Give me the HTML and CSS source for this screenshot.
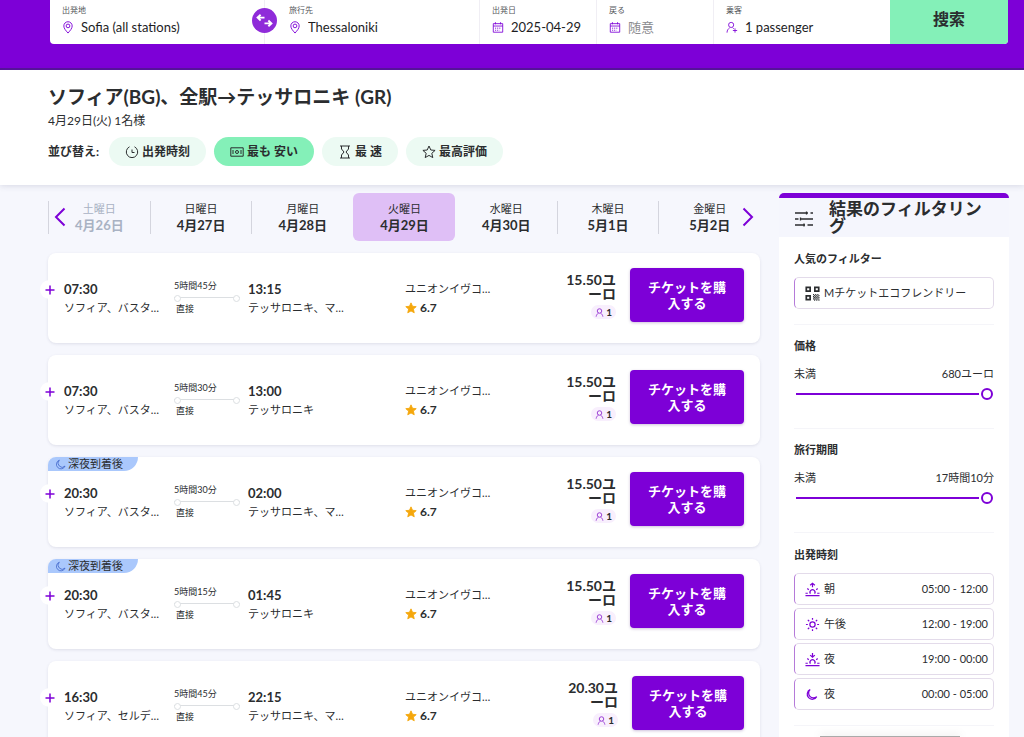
FILE: index.html
```html
<!DOCTYPE html>
<html lang="ja">
<head>
<meta charset="utf-8">
<meta name="viewport" content="width=device-width, initial-scale=1">
<title>ソフィア - テッサロニキ</title>
<link rel="stylesheet" href="styles.css">
</head>
<body>
<svg class="sprite" aria-hidden="true">
  <symbol id="pin" viewBox="0 0 12 14"><path d="M6 13C3.600 10.200 1.500 8 1.500 5.300a4.500 4.500 0 0 1 9 0C10.500 8 8.400 10.200 6 13Z"/><circle cx="6" cy="5.300" r="2"/></symbol>
  <symbol id="calendar" viewBox="0 0 14 14"><path d="M1.500 2.500h11v10h-11zM1.500 5.300h11M4 .8v2.500M10 .8v2.500"/><path d="M3.500 7.800h7M3.500 10.200h5" stroke-dasharray="1.200 1"/></symbol>
  <symbol id="person-plus" viewBox="0 0 14 14"><circle cx="6" cy="4" r="3"/><path d="M1.200 13c0-3 1.500-4.500 3-5.500M7.800 7.200 9 8.500M10.500 8v5M8 10.500h5"/></symbol>
  <symbol id="person" viewBox="0 0 12 12"><circle cx="6" cy="4" r="3"/><path d="M1.500 11.500c.3-2 1.500-3.700 3.200-5M10.500 11.500c-.3-2-1.500-3.700-3.200-5"/></symbol>
  <symbol id="moon" viewBox="0 0 14 14"><path d="M5.500 1.500a5.700 5.700 0 1 0 7.300 7.500A5.200 5.200 0 0 1 5.500 1.500Z"/></symbol>
  <symbol id="star" viewBox="0 0 14 14"><path d="m7 1 1.800 4 4.300.4-3.300 2.900 1 4.300L7 10.400l-3.800 2.200 1-4.300L.9 5.400 5.200 5z"/></symbol>
  <symbol id="plus" viewBox="0 0 10 10"><path d="M5 .5v9M.5 5h9"/></symbol>
</svg>

<header class="hero">
  <form class="search">
    <div class="field">
      <label class="field__label" for="from">出発地</label>
      <div class="field__row"><svg class="icon icon--field"><use href="#pin"/></svg><input class="field__input" id="from" type="text" value="Sofia (all stations)"></div>
      <button class="swap" type="button" aria-label="入れ替え"><svg viewBox="0 0 26 26"><path d="M13 10H6M9 7l-3.200 3L9 13M13 16h7M17 13l3.200 3-3.200 3"/></svg></button>
    </div>
    <div class="field field--to">
      <label class="field__label" for="to">旅行先</label>
      <div class="field__row"><svg class="icon icon--field"><use href="#pin"/></svg><input class="field__input" id="to" type="text" value="Thessaloniki"></div>
    </div>
    <div class="field">
      <label class="field__label" for="depart">出発日</label>
      <div class="field__row"><svg class="icon icon--field"><use href="#calendar"/></svg><input class="field__input" id="depart" type="text" value="2025-04-29"></div>
    </div>
    <div class="field">
      <label class="field__label" for="return">戻る</label>
      <div class="field__row"><svg class="icon icon--field"><use href="#calendar"/></svg><input class="field__input" id="return" type="text" placeholder="随意"></div>
    </div>
    <div class="field field--people">
      <label class="field__label" for="people">乗客</label>
      <div class="field__row"><svg class="icon icon--field"><use href="#person-plus"/></svg><input class="field__input" id="people" type="text" value="1 passenger"></div>
    </div>
    <button class="search__submit" type="submit">搜索</button>
  </form>
</header>

<section class="summary">
  <h1 class="summary__title">ソフィア(BG)、全駅→テッサロニキ (GR)</h1>
  <p class="summary__sub">4月29日(火) 1名様</p>
  <div class="sort">
    <span class="sort__label">並び替え:</span>
    <button class="pill" type="button"><svg class="icon icon--pill" viewBox="0 0 14 14"><path d="M4.500 1.800A5.700 5.700 0 1 0 9.500 1.800M7 4.500v3h2.500"/></svg>出発時刻</button>
    <button class="pill pill--active" type="button"><svg class="icon icon--pill" viewBox="0 0 14 14"><path d="M.8 2.800h12.400v8.400H.8zM3 5v4M11 5v4"/><circle cx="7" cy="7" r="1.500"/></svg>最も 安い</button>
    <button class="pill" type="button"><svg class="icon icon--pill" viewBox="0 0 14 14"><path d="M2 1h10M2 13h10M3.500 1v3L6 7l-2.500 3v3M10.500 1v3L8 7l2.500 3v3"/></svg>最 速</button>
    <button class="pill" type="button"><svg class="icon icon--pill"><use href="#star"/></svg>最高評価</button>
  </div>
</section>

<main class="content">
  <div class="results">
    <nav class="days" aria-label="日付">
      <button class="days__arrow days__arrow--prev" type="button" aria-label="前へ"><svg viewBox="0 0 12 20"><path d="M10.500 1.500 2 10l8.500 8.500"/></svg></button>
      <a class="day day--past" href="#"><span class="day__in"><span>土曜日</span><b>4月26日</b></span></a>
      <a class="day" href="#"><span class="day__in"><span>日曜日</span><b>4月27日</b></span></a>
      <a class="day" href="#"><span class="day__in"><span>月曜日</span><b>4月28日</b></span></a>
      <a class="day day--active" href="#"><span class="day__in"><span>火曜日</span><b>4月29日</b></span></a>
      <a class="day day--first" href="#"><span class="day__in"><span>水曜日</span><b>4月30日</b></span></a>
      <a class="day" href="#"><span class="day__in"><span>木曜日</span><b>5月1日</b></span></a>
      <a class="day" href="#"><span class="day__in"><span>金曜日</span><b>5月2日</b></span></a>
      <button class="days__arrow days__arrow--next" type="button" aria-label="次へ"><svg viewBox="0 0 12 20"><path d="M1.500 1.500 10 10l-8.500 8.500"/></svg></button>
    </nav>

    <article class="trip">
      <button class="trip__more" type="button" aria-label="詳細"><svg><use href="#plus"/></svg></button>
      <div class="stop"><b class="stop__time">07:30</b><span class="stop__name">ソフィア、バスタ…</span></div>
      <div class="ride"><span>5時間45分</span><i class="ride__line"></i><span class="ride__type">直接</span></div>
      <div class="stop"><b class="stop__time">13:15</b><span class="stop__name">テッサロニキ、マ…</span></div>
      <div class="carrier"><span>ユニオンイヴコ…</span><span class="rating"><svg><use href="#star"/></svg>6.7</span></div>
      <div class="buy"><div class="price"><b>15.50ユーロ</b><span class="seats"><svg><use href="#person"/></svg>1</span></div><button class="buy__btn" type="button">チケットを購入する</button></div>
    </article>

    <article class="trip">
      <button class="trip__more" type="button" aria-label="詳細"><svg><use href="#plus"/></svg></button>
      <div class="stop"><b class="stop__time">07:30</b><span class="stop__name">ソフィア、バスタ…</span></div>
      <div class="ride"><span>5時間30分</span><i class="ride__line"></i><span class="ride__type">直接</span></div>
      <div class="stop"><b class="stop__time">13:00</b><span class="stop__name">テッサロニキ</span></div>
      <div class="carrier"><span>ユニオンイヴコ…</span><span class="rating"><svg><use href="#star"/></svg>6.7</span></div>
      <div class="buy"><div class="price"><b>15.50ユーロ</b><span class="seats"><svg><use href="#person"/></svg>1</span></div><button class="buy__btn" type="button">チケットを購入する</button></div>
    </article>

    <article class="trip">
      <span class="trip__tag"><svg><use href="#moon"/></svg>深夜到着後</span>
      <button class="trip__more" type="button" aria-label="詳細"><svg><use href="#plus"/></svg></button>
      <div class="stop"><b class="stop__time">20:30</b><span class="stop__name">ソフィア、バスタ…</span></div>
      <div class="ride"><span>5時間30分</span><i class="ride__line"></i><span class="ride__type">直接</span></div>
      <div class="stop"><b class="stop__time">02:00</b><span class="stop__name">テッサロニキ、マ…</span></div>
      <div class="carrier"><span>ユニオンイヴコ…</span><span class="rating"><svg><use href="#star"/></svg>6.7</span></div>
      <div class="buy"><div class="price"><b>15.50ユーロ</b><span class="seats"><svg><use href="#person"/></svg>1</span></div><button class="buy__btn" type="button">チケットを購入する</button></div>
    </article>

    <article class="trip">
      <span class="trip__tag"><svg><use href="#moon"/></svg>深夜到着後</span>
      <button class="trip__more" type="button" aria-label="詳細"><svg><use href="#plus"/></svg></button>
      <div class="stop"><b class="stop__time">20:30</b><span class="stop__name">ソフィア、バスタ…</span></div>
      <div class="ride"><span>5時間15分</span><i class="ride__line"></i><span class="ride__type">直接</span></div>
      <div class="stop"><b class="stop__time">01:45</b><span class="stop__name">テッサロニキ</span></div>
      <div class="carrier"><span>ユニオンイヴコ…</span><span class="rating"><svg><use href="#star"/></svg>6.7</span></div>
      <div class="buy"><div class="price"><b>15.50ユーロ</b><span class="seats"><svg><use href="#person"/></svg>1</span></div><button class="buy__btn" type="button">チケットを購入する</button></div>
    </article>

    <article class="trip">
      <button class="trip__more" type="button" aria-label="詳細"><svg><use href="#plus"/></svg></button>
      <div class="stop"><b class="stop__time">16:30</b><span class="stop__name">ソフィア、セルデ…</span></div>
      <div class="ride"><span>5時間45分</span><i class="ride__line"></i><span class="ride__type">直接</span></div>
      <div class="stop"><b class="stop__time">22:15</b><span class="stop__name">テッサロニキ、マ…</span></div>
      <div class="carrier"><span>ユニオンイヴコ…</span><span class="rating"><svg><use href="#star"/></svg>6.7</span></div>
      <div class="buy"><div class="price price--wide"><b>20.30ユーロ</b><span class="seats"><svg><use href="#person"/></svg>1</span></div><button class="buy__btn" type="button">チケットを購入する</button></div>
    </article>
  </div>

  <aside class="filters">
    <div class="filters__head">
      <svg class="filters__icon" viewBox="0 0 20 18"><path d="M1 3h13M16.500 3H19M1 9h3.500M7 9h12M1 15h10M13.500 15H19M12.500 1.500v3M6.500 7.500v3M10 13.500v3"/></svg>
      <h2 class="filters__title">結果のフィルタリング</h2>
    </div>
    <section class="group">
      <h3 class="group__title">人気のフィルター</h3>
      <button class="option" type="button"><svg class="option__icon option__icon--dark" viewBox="0 0 14 14"><path d="M1.200 1.200h3.600v3.600H1.200zM9.200 1.200h3.600v3.600H9.200zM1.200 9.200h3.600v3.600H1.200z" stroke-width="1.600"/><path d="M7.500 8h6M7.500 10h6M7.500 12h6" stroke-dasharray="1 1"/><path d="M8.500 9h5M8.500 11h5M8.500 13h5" stroke-dasharray="1 1"/></svg>Mチケットエコフレンドリー</button>
    </section>
    <section class="group group--range">
      <h3 class="group__title">価格</h3>
      <div class="group__row"><label for="price">未満</label><span>680ユーロ</span></div>
      <input class="range" id="price" type="range" min="0" max="680" value="680">
    </section>
    <section class="group group--range">
      <h3 class="group__title">旅行期間</h3>
      <div class="group__row"><label for="duration">未満</label><span>17時間10分</span></div>
      <input class="range" id="duration" type="range" min="0" max="1030" value="1030">
    </section>
    <section class="group">
      <h3 class="group__title">出発時刻</h3>
      <div class="group__list">
        <button class="option" type="button"><svg class="option__icon" viewBox="0 0 16 16"><path d="M.5 14.500h15M.5 12H3M13 12h2.500M5.800 12.500a2.700 2.700 0 1 1 4.400 0M8 5.500V1.500M5.500 3.500 8 1.300l2.500 2.200M2.500 7 4 8.300M13.500 7 12 8.300"/></svg>朝<span class="option__time">05:00 - 12:00</span></button>
        <button class="option" type="button"><svg class="option__icon" viewBox="0 0 16 16"><circle cx="8" cy="8" r="2.800"/><path d="M8 1v2M8 13v2M1 8h2M13 8h2M3 3l1.500 1.500M11.500 11.500 13 13M13 3l-1.500 1.500M4.500 11.500 3 13"/></svg>午後<span class="option__time">12:00 - 19:00</span></button>
        <button class="option" type="button"><svg class="option__icon" viewBox="0 0 16 16"><path d="M.5 14.500h15M.5 12H3M13 12h2.500M5.800 12.500a2.700 2.700 0 1 1 4.400 0M8 1v4.500M5.500 3.300 8 5.500l2.500-2.200M2.500 7 4 8.300M13.500 7 12 8.300"/></svg>夜<span class="option__time">19:00 - 00:00</span></button>
        <button class="option" type="button"><svg class="option__icon" viewBox="0 -1 16 16"><path d="M5.500 1.800a5.400 5.400 0 1 0 7 7.500A4.700 4.700 0 0 1 5.500 1.800Z"/></svg>夜<span class="option__time">00:00 - 05:00</span></button>
      </div>
    </section>
  </aside>
</main>
<div class="sheet"></div>
</body>
</html>
```

FILE: styles.css
```css
* { box-sizing: border-box; }

body {
  display: flex;
  flex-direction: column;
  margin: 0;
  height: 100vh;
  overflow: hidden;
  background: #f6f7fd;
  color: #2b2d2f;
  font-family: Lato, "Noto Sans CJK JP", sans-serif;
  font-size: 11px;
  line-height: 16px;
}

button, input { font: inherit; color: inherit; border: 0; padding: 0; background: none; }
button { cursor: pointer; }
a { color: inherit; text-decoration: none; }
h1, h2, h3, p { margin: 0; }
svg { fill: none; stroke: currentColor; flex: none; }
.sprite { position: absolute; width: 0; height: 0; }

.hero {
  flex: none;
  padding: 0 16px 24px 50px;
  background: #7d00d7;
  border-bottom: 2px solid #56129c;
}

.search {
  display: grid;
  grid-template-columns: 215fr 215fr 117fr 117fr 176fr 118fr;
  height: 44px;
  background: #fff;
  border-radius: 0 0 4px 4px;
}

.field {
  position: relative;
  min-width: 0;
  padding: 4px 4px 0 12px;
  border-right: 1px solid #f0eef4;
}
.field--to { padding-left: 24px; }
.field--people { border-right: 0; }
.field__label { display: block; color: #55585c; font-size: 8px; line-height: 13px; }
.field__row { display: flex; align-items: center; gap: 7px; height: 20px; color: #7d00d7; }
.field__input { width: 100%; min-width: 0; outline: 0; color: #1d1d1f; font-size: 13px; line-height: 18px; }
.field__input::placeholder { color: #8b8b8f; opacity: 1; }
.icon--field { width: 12px; height: 13px; }

.swap {
  position: absolute;
  z-index: 1;
  top: 8px;
  right: -13px;
  width: 25px;
  height: 25px;
  border-radius: 50%;
  background: #8f2bd9;
  color: #fff;
}
.swap svg { display: block; width: 25px; height: 25px; stroke-width: 2; }

.search__submit {
  padding-bottom: 6px;
  background: #84f0b8;
  border-radius: 0 0 4px 0;
  font-size: 16px;
  font-weight: 700;
}

.summary {
  position: relative;
  flex: none;
  padding: 15px 16px 19px 48px;
  background: #fff;
  box-shadow: 0 1px 6px rgba(60, 60, 100, .16);
}
.summary__title { font-size: 19px; line-height: 24px; }
.summary__sub { margin-top: 4px; font-size: 12px; }
.sort { display: flex; align-items: center; gap: 8px; margin-top: 8px; }
.sort__label { margin-right: 2px; font-size: 12px; font-weight: 700; }
.pill {
  display: flex;
  align-items: center;
  gap: 3px;
  height: 29px;
  padding: 0 16px;
  border-radius: 15px;
  background: #ecfaf3;
  font-size: 12px;
  font-weight: 700;
}
.pill--active { background: #84f0b8; }
.icon--pill { width: 14px; height: 14px; }

.content {
  display: flex;
  flex: 1;
  align-items: flex-start;
  gap: 19px;
  min-height: 0;
  padding: 8px 15px 0 48px;
}
.results { display: grid; flex: 712 1 0; gap: 12px; min-width: 0; }

.days { position: relative; display: flex; height: 48px; }
.day { display: flex; flex: 1 1 0; align-items: center; border-radius: 6px; }
.day__in { display: grid; flex: 1; height: 33px; border-left: 1px solid #d4d5de; text-align: center; }
.day b { font-size: 13px; }
.day--active { background: #dfbff6; }
.day--active .day__in, .day--first .day__in { border-color: transparent; }
.day--past { color: #a9b2c3; }
.days__arrow { position: absolute; top: 14px; color: #7d00d7; }
.days__arrow svg { display: block; width: 12px; height: 20px; stroke-width: 2; }
.days__arrow--prev { left: 6px; }
.days__arrow--next { right: 6px; }

.trip {
  position: relative;
  display: grid;
  grid-template-columns: 110px 74px 157px 1fr 180px;
  height: 90px;
  padding: 0 16px;
  background: #fff;
  border-radius: 8px;
  box-shadow: 0 1px 3px rgba(60, 60, 100, .12);
}
.trip__more {
  position: absolute;
  top: 27px;
  left: -8px;
  display: grid;
  place-items: center;
  width: 19px;
  height: 19px;
  border-radius: 50%;
  background: #fff;
  color: #7d00d7;
}
.trip__more svg { width: 10px; height: 10px; stroke-width: 1.5; }
.trip__tag {
  position: absolute;
  top: 0;
  left: 0;
  display: flex;
  align-items: center;
  gap: 2px;
  height: 14px;
  padding: 0 15px 0 7px;
  border-radius: 8px 0 14px 0;
  background: #aac8fc;
}
.trip__tag svg { width: 11px; height: 11px; color: #3d63c9; }

.stop, .carrier { display: grid; align-content: start; gap: 3px; padding-top: 28px; white-space: nowrap; }
.stop__time { font-size: 13px; }
.ride { padding-top: 26px; font-size: 9px; line-height: 14px; }
.ride > span { display: block; }
.ride__line { position: relative; display: block; width: 66px; height: 1px; margin: 4px 0; background: #dcdfe2; }
.ride__line::before, .ride__line::after {
  content: "";
  position: absolute;
  top: -2px;
  width: 5px;
  height: 5px;
  border: 1px solid #dcdfe2;
  border-radius: 50%;
  background: #fff;
}
.ride__line::before { left: 0; }
.ride__line::after { right: 0; }
.ride__type { padding-left: 2px; }
.rating { display: flex; align-items: center; gap: 3px; font-size: 12px; font-weight: 700; }
.rating svg { width: 12px; height: 12px; color: #f5a70c; fill: currentColor; }

.buy { display: flex; gap: 14px; padding-top: 15px; }
.price { display: flex; flex: none; flex-direction: column; align-items: flex-end; width: 52px; padding-top: 5px; text-align: right; }
.price--wide { width: 54px; }
.price b { font-size: 14px; line-height: 14px; word-break: break-all; }
.seats {
  display: flex;
  align-items: center;
  gap: 2px;
  height: 14px;
  margin-top: 4px;
  padding: 0 4px;
  border-radius: 7px;
  background: #f8effd;
  font-size: 10px;
  font-weight: 700;
}
.seats svg { width: 9px; height: 9px; color: #9a3fd4; stroke-width: 1.3; }
.buy__btn {
  flex: 1;
  height: 54px;
  padding: 0 16px;
  border-radius: 4px;
  background: #7d00d7;
  color: #fff;
  box-shadow: 0 1px 3px rgba(60, 0, 110, .25);
  font-size: 13px;
  font-weight: 700;
  word-break: break-all;
}

.filters {
  flex: 230 1 0;
  align-self: stretch;
  min-width: 0;
  border-top: 5px solid #7d00d7;
  border-radius: 5px 5px 0 0;
  background: #fff;
}
.filters__head { display: flex; align-items: center; gap: 15px; padding: 2px 15px 3px; background: #f5f6fd; }
.filters__icon { width: 20px; height: 18px; margin-top: 3px; stroke-width: 1.3; }
.filters__title { font-size: 17px; line-height: 17px; }
.group { margin: 0 15px; padding: 14px 0 15px; border-bottom: 1px solid #f5f5f9; }
.group--range { padding: 13px 0 28px; }
.group__title { margin-bottom: 10px; font-size: 11px; }
.group--range .group__title { margin-bottom: 12px; }
.group__row { display: flex; justify-content: space-between; }
.group__list { display: grid; gap: 3px; }
.option {
  display: flex;
  align-items: center;
  gap: 4px;
  width: 100%;
  height: 32px;
  padding: 0 5px 0 10px;
  border: 1px solid #e3dbea;
  border-left-color: #b57ad9;
  border-radius: 5px;
  text-align: left;
}
.option__icon { width: 15px; height: 15px; color: #7d00d7; stroke-width: 1.3; }
.option__icon--dark { color: #2b2d2f; }
.option__time { margin-left: auto; }

.range { appearance: none; display: block; width: 100%; height: 12px; margin: 6px 0 0; padding: 0 1px; }
.range::-webkit-slider-runnable-track {
  height: 12px;
  background: linear-gradient(#7d00d7, #7d00d7) 1px center / calc(100% - 15px) 2px no-repeat;
}
.range::-webkit-slider-thumb {
  appearance: none;
  width: 12px;
  height: 12px;
  border: 2px solid #7d00d7;
  border-radius: 50%;
  background: #fff;
}

/* Collapsed bottom sheet that peeks over the lower edge of the window */
.sheet {
  position: fixed;
  right: 64px;
  bottom: 0;
  width: 140px;
  height: 1px;
  background: #aaa;
  box-shadow: 0 0 8px rgba(0, 0, 0, .35);
}
```
